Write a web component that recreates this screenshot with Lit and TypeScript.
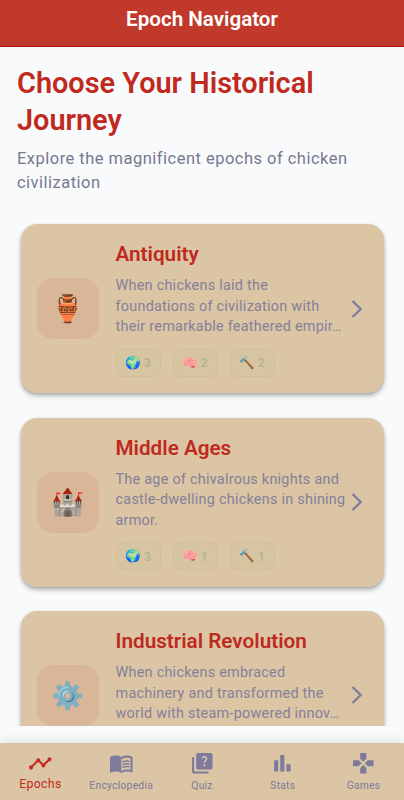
import { LitElement, html, css, svg } from "lit";
import { customElement, property } from "lit/decorators.js";

interface Epoch {
  title: string;
  emoji: string;
  lines: string[];
  counts: [string, number][];
}

const epochs: Epoch[] = [
  {
    title: "Antiquity",
    emoji: "🏺",
    lines: ["When chickens laid the", "foundations of civilization with", "their remarkable feathered empir…"],
    counts: [["🌍", 3], ["🧠", 2], ["🔨", 2]],
  },
  {
    title: "Middle Ages",
    emoji: "🏰",
    lines: ["The age of chivalrous knights and", "castle-dwelling chickens in shining", "armor."],
    counts: [["🌍", 3], ["🧠", 1], ["🔨", 1]],
  },
  {
    title: "Industrial Revolution",
    emoji: "⚙️",
    lines: ["When chickens embraced", "machinery and transformed the", "world with steam-powered innov…"],
    counts: [],
  },
];

const tabs = [
  {
    label: "Epochs",
    icon: svg`<path d="M23 8c0 1.1-.9 2-2 2-.18 0-.35-.02-.51-.07l-3.56 3.55c.05.16.07.34.07.52 0 1.1-.9 2-2 2s-2-.9-2-2c0-.18.02-.36.07-.52l-2.55-2.55c-.16.05-.34.07-.52.07s-.36-.02-.52-.07l-4.55 4.56c.05.16.07.33.07.51 0 1.1-.9 2-2 2s-2-.9-2-2 .9-2 2-2c.18 0 .35.02.51.07l4.56-4.55C8.02 9.36 8 9.18 8 9c0-1.1.9-2 2-2s2 .9 2 2c0 .18-.02.36-.07.52l2.55 2.55c.16-.05.34-.07.52-.07s.36.02.52.07l3.55-3.56C19.02 8.35 19 8.18 19 8c0-1.1.9-2 2-2s2 .9 2 2z"/>`,
  },
  {
    label: "Encyclopedia",
    icon: svg`<path d="M21 5c-1.11-.35-2.33-.5-3.5-.5-1.95 0-4.05.4-5.5 1.5-1.45-1.1-3.55-1.5-5.5-1.5S2.45 4.9 1 6v14.65c0 .25.25.5.5.5.1 0 .15-.05.25-.05C3.1 20.45 5.05 20 6.5 20c1.95 0 4.05.4 5.5 1.5 1.35-.85 3.8-1.5 5.5-1.5 1.65 0 3.35.3 4.75 1.05.1.05.15.05.25.05.25 0 .5-.25.5-.5V6c-.6-.45-1.25-.75-2-1zm0 13.5c-1.1-.35-2.3-.5-3.5-.5-1.7 0-4.15.65-5.5 1.5V8c1.35-.85 3.8-1.5 5.5-1.5 1.2 0 2.4.15 3.5.5v11.5z"/><path d="M17.5 10.5c.88 0 1.73.09 2.5.26V9.24c-.79-.15-1.64-.24-2.5-.24-1.7 0-3.24.29-4.5.83v1.66c1.13-.64 2.7-.99 4.5-.99zM13 12.49v1.66c1.13-.64 2.7-.99 4.5-.99.88 0 1.73.09 2.5.26V11.9c-.79-.15-1.64-.24-2.5-.24-1.7 0-3.24.3-4.5.83zM17.5 14.33c-1.7 0-3.24.29-4.5.83v1.66c1.13-.64 2.7-.99 4.5-.99.88 0 1.73.09 2.5.26v-1.52c-.79-.16-1.64-.24-2.5-.24z"/>`,
  },
  {
    label: "Quiz",
    icon: svg`<path d="M4 6H2v14c0 1.1.9 2 2 2h14v-2H4V6zm16-4H8c-1.1 0-2 .9-2 2v12c0 1.1.9 2 2 2h12c1.1 0 2-.9 2-2V4c0-1.1-.9-2-2-2zm-5.99 13c-.59 0-1.05-.47-1.05-1.05 0-.59.47-1.04 1.05-1.04.59 0 1.04.45 1.04 1.04-.01.58-.45 1.05-1.04 1.05zm2.5-6.17c-.63.93-1.23 1.21-1.56 1.81-.13.24-.18.4-.18 1.18h-1.52c0-.41-.06-1.08.26-1.65.41-.73 1.18-1.16 1.63-1.8.48-.68.21-1.94-1.14-1.94-.88 0-1.32.67-1.5 1.23l-1.37-.57C11.51 5.96 12.52 5 13.99 5c1.23 0 2.08.56 2.51 1.26.37.6.58 1.73.01 2.57z"/>`,
  },
  {
    label: "Stats",
    icon: svg`<path d="M4 9h4v11H4zM16 13h4v7h-4zM10 4h4v16h-4z"/>`,
  },
  {
    label: "Games",
    icon: svg`<path d="M15 7.5V2H9v5.5l3 3 3-3zM7.5 9H2v6h5.5l3-3-3-3zM9 16.5V22h6v-5.5l-3-3-3 3zM16.5 9l-3 3 3 3H22V9h-5.5z"/>`,
  },
];

@customElement("epoch-card")
class EpochCard extends LitElement {
  @property({ attribute: false }) epoch!: Epoch;

  static styles = css`
    :host {
      display: flex;
      align-items: center;
      box-sizing: border-box;
      height: 169px;
      flex: none;
      padding: 0 15px 0 16.5px;
      border-radius: 16px;
      background: #dbc5a4;
      box-shadow: 0 3px 5px rgba(0, 0, 0, 0.26), 0 1px 3px rgba(0, 0, 0, 0.12);
    }
    .tile {
      flex: none;
      display: flex;
      align-items: center;
      justify-content: center;
      box-sizing: border-box;
      width: 62px;
      height: 61px;
      padding-top: 1.5px;
      border-radius: 16px;
      background: #dab699;
      font-family: "Noto Color Emoji", sans-serif;
      font-size: 26.7px;
      line-height: 1;
    }
    .body {
      flex: 1;
      min-width: 0;
      height: 135px;
      margin-left: 16.5px;
    }
    .title {
      margin: 0;
      font-size: 20.7px;
      line-height: 26px;
      font-weight: 600;
      color: #bf2a20;
      white-space: nowrap;
    }
    .text {
      margin: 9px 0 11px;
      font-size: 14.4px;
      line-height: 20.6px;
      letter-spacing: 0.26px;
      color: #85809a;
      white-space: nowrap;
    }
    .line {
      display: block;
    }
    .chips {
      display: flex;
      gap: 12px;
    }
    .chip {
      box-sizing: border-box;
      display: flex;
      align-items: center;
      justify-content: center;
      gap: 3px;
      width: 45px;
      height: 28px;
      border: 1px solid #cdbf99;
      border-radius: 8px;
      background: #d7c4a1;
      color: #b0b38c;
      font-size: 12.5px;
      font-weight: 500;
    }
    .emoji {
      font-family: "Noto Color Emoji", sans-serif;
      font-size: 12.6px;
      line-height: 1;
    }
    .arrow {
      flex: none;
      width: 24px;
      height: 24px;
    }
  `;

  render() {
    return html`
      <div class="tile">${this.epoch.emoji}</div>
      <div class="body">
        <h2 class="title">${this.epoch.title}</h2>
        <div class="text">${this.epoch.lines.map((l) => html`<span class="line">${l}</span>`)}</div>
        <div class="chips">
          ${this.epoch.counts.map(([e, n]) => html`<div class="chip"><span class="emoji">${e}</span><span>${n}</span></div>`)}
        </div>
      </div>
      <svg class="arrow" viewBox="0 0 24 24" fill="none" stroke="#7d7a9c" stroke-width="2.2">
        <path d="M7.5 4l8.2 8-8.2 8" />
      </svg>
    `;
  }
}

@customElement("app-root")
class AppRoot extends LitElement {
  static styles = css`
    :host {
      display: flex;
      flex-direction: column;
      height: 800px;
      overflow: hidden;
      background: #f8fafc;
      font-family: Roboto, sans-serif;
    }
    .bar {
      flex: none;
      box-sizing: border-box;
      height: 47px;
      padding-top: 6px;
      border-bottom: 1px solid #a81a12;
      background: #c1392b;
      color: #fff;
      text-align: center;
      font-size: 20.6px;
      line-height: 27px;
      font-weight: 600;
    }
    .content {
      flex: none;
      box-sizing: border-box;
      height: 679px;
      padding: 17.5px 0 0;
      overflow: hidden;
    }
    .heading {
      margin: 0 17px;
      font-size: 28.9px;
      line-height: 37px;
      font-weight: 600;
      color: #bf2a20;
    }
    .lead {
      margin: 8px 17px 0;
      font-size: 16.5px;
      line-height: 24.6px;
      letter-spacing: 0.48px;
      color: #75798f;
    }
    .list {
      display: flex;
      flex-direction: column;
      gap: 24.4px;
      margin: 28.5px 20.5px 0;
    }
    .nav {
      position: relative;
      flex: none;
      display: grid;
      grid-template-columns: repeat(5, 1fr);
      box-sizing: border-box;
      height: 57.5px;
      margin-top: 16.5px;
      background: #dbc5a4;
      box-shadow: 0 -2px 10px rgba(0, 0, 0, 0.1);
      color: #7d7a9c;
    }
    .tab {
      display: flex;
      flex-direction: column;
      align-items: center;
      padding-top: 8px;
      font-size: 10.3px;
      line-height: 15px;
      letter-spacing: 0.25px;
      white-space: nowrap;
    }
    .tab.active {
      color: #c42b23;
      font-size: 12.4px;
      line-height: 12px;
    }
    .icon {
      width: 24.6px;
      height: 24.6px;
      margin-bottom: 3px;
      fill: currentColor;
    }
  `;

  render() {
    return html`
      <header class="bar">Epoch Navigator</header>
      <main class="content">
        <h1 class="heading">Choose Your Historical<br />Journey</h1>
        <p class="lead">Explore the magnificent epochs of chicken<br />civilization</p>
        <div class="list">${epochs.map((e) => html`<epoch-card .epoch=${e}></epoch-card>`)}</div>
      </main>
      <nav class="nav">
        ${tabs.map(
          (t, i) => html`<div class="tab ${i === 0 ? "active" : ""}">
            <svg class="icon" viewBox="0 0 24 24">${t.icon}</svg>
            <span>${t.label}</span>
          </div>`,
        )}
      </nav>
    `;
  }
}
